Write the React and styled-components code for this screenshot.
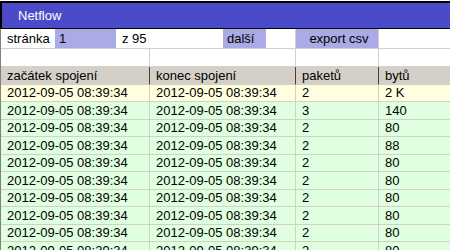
import React from "react";
import styled, { createGlobalStyle } from "styled-components";

const Global = createGlobalStyle`
  html, body { margin: 0; padding: 0; background: #ffffff; }
  body { font-family: "Liberation Sans", Arial, sans-serif; font-size: 13px; color: #000; }
`;

const Page = styled.div`
  width: 450px;
  height: 250px;
  overflow: hidden;
  padding-top: 1px;
  box-sizing: border-box;
`;

const TitleBar = styled.div`
  height: 25px;
  background: #4b4bc9;
  border-top: 2px solid #000;
  border-left: 2px solid #000;
  border-bottom: 1px solid #000;
  color: #ffffff;
  font-size: 13px;
  display: flex;
  align-items: center;
  padding-left: 16px;
`;

const Body = styled.div`
  border-left: 1px solid #808080;
  margin-left: 0;
`;

const Grid = styled.div`
  display: grid;
  grid-template-columns: 149px 146px 83px 1fr;
`;

const Cell = styled.div`
  box-sizing: border-box;
  height: ${(p) => p.$h || 17.5}px;
  display: flex;
  align-items: center;
  padding-left: ${(p) => (p.$pad ?? 6)}px;
  white-space: nowrap;
  background: ${(p) => p.$bg || "transparent"};
  border-right: 1px solid ${(p) => p.$line || "#d4d0c8"};
  border-bottom: 1px solid ${(p) => p.$line || "#d4d0c8"};
`;

const ToolRow = styled.div`
  grid-column: 1 / span 2;
  display: flex;
  align-items: stretch;
  height: 20px;
  border-bottom: 1px solid #d4d0c8;
  border-right: 1px solid #d4d0c8;
  box-sizing: border-box;
`;

const Label = styled.span`
  display: flex;
  align-items: center;
  padding: 0 ${(p) => p.$pr || 4}px 0 6px;
  width: ${(p) => (p.$w ? p.$w + "px" : "auto")};
  box-sizing: border-box;
`;

const Field = styled.span`
  display: flex;
  align-items: center;
  background: #aaaae6;
  width: ${(p) => p.$w}px;
  padding-left: ${(p) => p.$pl || 4}px;
  box-sizing: border-box;
  justify-content: ${(p) => (p.$center ? "center" : "flex-start")};
  margin-left: ${(p) => p.$ml || 0}px;
`;

const HeadCell = styled(Cell)`
  background: #d4d0c8;
  border-right: 1px solid #404040;
  border-bottom: 1px solid #d4d0c8;
`;

const rows = [
  ["2", "2 K"],
  ["3", "140"],
  ["2", "80"],
  ["2", "88"],
  ["2", "80"],
  ["2", "80"],
  ["2", "80"],
  ["2", "80"],
  ["2", "80"],
  ["2", "80"],
];

const TS = "2012-09-05 08:39:34";

export default function App() {
  return (
    <Page>
      <Global />
      <TitleBar>Netflow</TitleBar>
      <Body>
        <Grid>
          <ToolRow>
            <Label $w={54}>stránka</Label>
            <Field $w={61}>1</Field>
            <Label>z 95</Label>
            <Field $w={43} $pl={4} style={{ marginLeft: "auto" }}>další</Field>
            <span style={{ width: 29 }} />
          </ToolRow>
          <Cell $h={20} $pad={0}>
            <Field $w={83} $center style={{ height: "100%" }}>export csv</Field>
          </Cell>
          <Cell $h={20} style={{ borderRight: "none" }} />

          <Cell $h={18} />
          <Cell $h={18} />
          <Cell $h={18} />
          <Cell $h={18} style={{ borderRight: "none" }} />

          <HeadCell>začátek spojení</HeadCell>
          <HeadCell>konec spojení</HeadCell>
          <HeadCell>paketů</HeadCell>
          <HeadCell style={{ borderRight: "none" }}>bytů</HeadCell>

          {rows.map(([p, b], i) => {
            const bg = i === 0 ? "#ffffe0" : "#e0ffe0";
            return (
              <React.Fragment key={i}>
                <Cell $bg={bg}>{TS}</Cell>
                <Cell $bg={bg}>{TS}</Cell>
                <Cell $bg={bg}>{p}</Cell>
                <Cell $bg={bg} style={{ borderRight: "none" }}>{b}</Cell>
              </React.Fragment>
            );
          })}
        </Grid>
      </Body>
    </Page>
  );
}
